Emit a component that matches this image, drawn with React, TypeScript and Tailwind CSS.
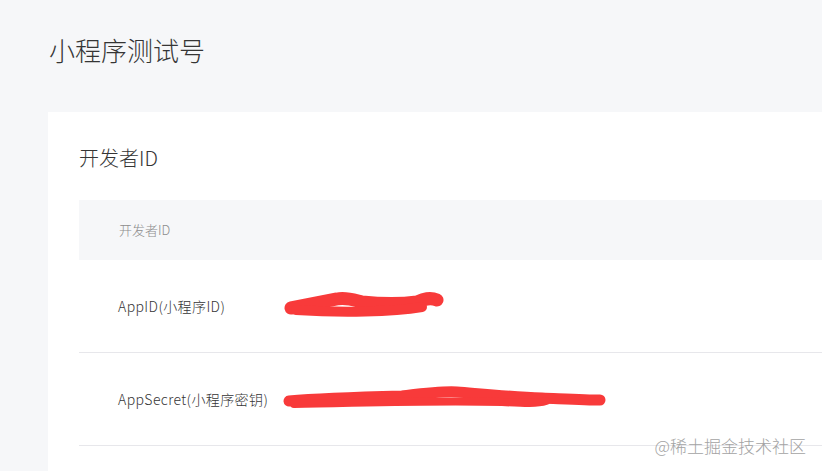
import React from "react";

const rows = [
  { label: "AppID(小程序ID)", scribble: "short" },
  { label: "AppSecret(小程序密钥)", scribble: "long" },
];

function Scribble({ kind }: { kind: string }) {
  if (kind === "short") {
    return (
      <svg width="170" height="30" viewBox="0 0 170 30" className="block">
        <path
          d="M9 17 C 25 14, 40 11, 55 8 C 64 6, 72 9, 80 11 C 100 13, 120 13, 135 11 C 142 8, 148 6, 155 9"
          stroke="#f83a3a"
          strokeWidth="13"
          strokeLinecap="round"
          fill="none"
        />
        <path d="M14 19 C 60 22, 110 21, 140 16" stroke="#f83a3a" strokeWidth="10" strokeLinecap="round" fill="none" />
      </svg>
    );
  }
  return (
    <svg width="330" height="30" viewBox="0 0 330 30" className="block">
      <path
        d="M7 17 C 40 14, 80 13, 120 12 C 145 9, 160 7, 175 8 C 200 10, 230 13, 260 14 C 285 15, 305 16, 318 16"
        stroke="#f83a3a"
        strokeWidth="11"
        strokeLinecap="round"
        fill="none"
      />
      <path d="M12 20 C 80 19, 150 16, 220 18 C 240 19, 255 20, 264 17" stroke="#f83a3a" strokeWidth="8" strokeLinecap="round" fill="none" />
    </svg>
  );
}

export default function App() {
  return (
    <div
      className="w-[822px] h-[471px] overflow-hidden bg-[#f6f7f9] pl-12 relative font-light"
      style={{ fontFamily: '"Noto Sans CJK SC", "Noto Sans", sans-serif' }}
    >
      <h1 className="pt-[32px] text-[26px] leading-[36px] text-[#353535] pl-[1px]">小程序测试号</h1>
      <div className="mt-[44px] bg-white h-[400px] pl-[31px] pt-[32px]">
        <h2 className="text-[20px] leading-[28px] text-[#353535]">开发者ID</h2>
        <div className="mt-[28px]">
          <div className="h-[60px] bg-[#f6f7f9] flex items-center pl-[40px] text-[13px] text-[#8d8d8d]">开发者ID</div>
          {rows.map((r) => (
            <div key={r.label} className="h-[93px] border-b border-[#e7e7eb] flex items-center pl-[39px] text-[14px] text-[#353535]">
              <div className="w-[164px] shrink-0 tracking-[0.4px]">{r.label}</div>
              <Scribble kind={r.scribble} />
            </div>
          ))}
        </div>
      </div>
      <div className="absolute right-[16px] top-[434px] text-[17px] leading-[24px] text-[#a3a3a3]">@稀土掘金技术社区</div>
    </div>
  );
}
